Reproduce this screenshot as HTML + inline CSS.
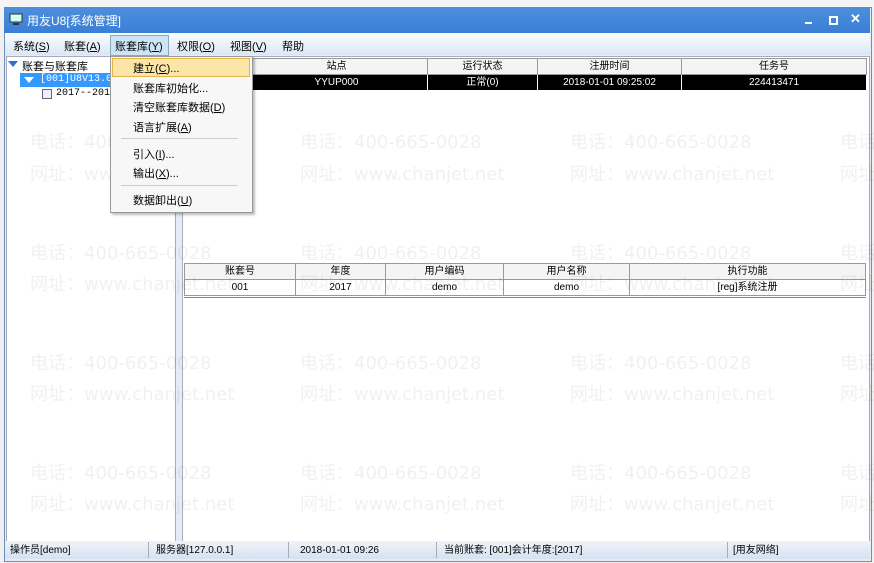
<!DOCTYPE html>
<html><head><meta charset="utf-8"><style>
body{margin:0;width:874px;height:563px;background:#f0f0f0;position:relative;overflow:hidden;font-family:"Liberation Sans","Noto Sans CJK SC",sans-serif;font-size:11px;color:#000}
.abs{position:absolute}
.wm{position:absolute;color:rgba(0,0,0,0.06);font-size:18px;white-space:nowrap;font-family:"DejaVu Sans","Noto Sans CJK SC",sans-serif;z-index:50}
table{border-collapse:collapse;position:absolute;font-size:10px;table-layout:fixed}
td{border:1px solid #999;text-align:center;height:15px;padding:0;line-height:15px;overflow:hidden;white-space:nowrap}
.st{position:absolute;top:545px;font-size:10px;line-height:12px}
</style></head><body>
<div class="abs" style="left:0;top:0;width:874px;height:8px;background:#f4f4f4"></div>
<div class="abs" style="left:4px;top:7px;width:866px;height:553px;background:#e4ecf7;border:1px solid #6b8fc0"></div>
<div class="abs" style="left:4px;top:7px;width:866px;height:26px;background:linear-gradient(#4c8fdc,#3a7fd6)"></div>
<svg class="abs" style="left:9px;top:13px" width="14" height="13"><rect x="1" y="1" width="12" height="8" fill="#cfe" stroke="#333"/><rect x="4" y="10" width="6" height="2" fill="#333"/></svg>
<div class="abs" style="left:27px;top:12px;color:#fff;font-size:12px">用友U8[系统管理]</div>
<div class="abs" style="left:805px;top:22px;width:7px;height:2px;background:#fff"></div>
<div class="abs" style="left:829px;top:16px;width:5px;height:5px;border:2px solid #fff"></div>
<div class="abs" style="left:850px;top:11px;color:#fff;font-size:13px;font-weight:bold">✕</div>
<div class="abs" style="left:5px;top:33px;width:865px;height:22px;background:linear-gradient(#fafcff,#dce7f4)"></div>
<div class="abs" style="left:110px;top:35px;width:57px;height:19px;background:#cde4f7;border:1px solid #8ab"></div>
<div class="abs" style="left:13px;top:38px">系统(<u>S</u>)</div>
<div class="abs" style="left:64px;top:38px">账套(<u>A</u>)</div>
<div class="abs" style="left:115px;top:38px">账套库(<u>Y</u>)</div>
<div class="abs" style="left:177px;top:38px">权限(<u>O</u>)</div>
<div class="abs" style="left:230px;top:38px">视图(<u>V</u>)</div>
<div class="abs" style="left:282px;top:38px">帮助</div>
<div class="abs" style="left:6px;top:56px;width:168px;height:484px;background:#fff;border:1px solid #aab"></div>
<div class="abs" style="left:8px;top:61px;width:0;height:0;border-left:5px solid transparent;border-right:5px solid transparent;border-top:6px solid #2a6fd6"></div>
<div class="abs" style="left:22px;top:58px">账套与账套库</div>
<div class="abs" style="left:20px;top:73px;width:90px;height:14px;background:#3399ff"></div>
<div class="abs" style="left:24px;top:77px;width:0;height:0;border-left:5px solid transparent;border-right:5px solid transparent;border-top:6px solid #fff"></div>
<div class="abs" style="left:40px;top:74px;color:#fff;font-size:10px;font-family:'Liberation Mono',monospace">[001]U8V13.0ź</div>
<div class="abs" style="left:42px;top:89px;width:8px;height:8px;border:1px solid #667;background:#eef"></div>
<div class="abs" style="left:56px;top:88px;font-size:10px;font-family:'Liberation Mono',monospace">2017--2017</div>
<div class="abs" style="left:182px;top:56px;width:686px;height:484px;background:#fff;border:1px solid #aab"></div>
<table style="left:183px;top:58px;width:684px">
<colgroup><col style="width:62px"><col style="width:182px"><col style="width:110px"><col style="width:144px"><col></colgroup>
<tr style="background:#f4f4f4"><td style="text-align:left;padding-left:70px">统</td><td>站点</td><td>运行状态</td><td>注册时间</td><td>任务号</td></tr>
<tr style="background:#000;color:#fff"><td style="text-align:left;padding-left:66px">理</td><td style="border-color:#fff">YYUP000</td><td style="border-color:#fff">正常(0)</td><td style="border-color:#fff">2018-01-01 09:25:02</td><td style="border-color:#fff">224413471</td></tr>
</table>
<table style="left:184px;top:263px;width:682px">
<colgroup><col style="width:111px"><col style="width:90px"><col style="width:118px"><col style="width:126px"><col></colgroup>
<tr style="background:#f4f4f4"><td>账套号</td><td>年度</td><td>用户编码</td><td>用户名称</td><td>执行功能</td></tr>
<tr><td>001</td><td>2017</td><td>demo</td><td>demo</td><td>[reg]系统注册</td></tr>
</table>
<div class="abs" style="left:184px;top:297px;width:682px;height:1px;background:#888"></div>
<div class="abs" style="left:110px;top:56px;width:141px;height:155px;background:#f7f7f7;border:1px solid #999;box-shadow:2px 2px 2px rgba(0,0,0,.25);z-index:60"></div>
<div class="abs" style="left:112px;top:58px;width:136px;height:17px;background:#fbe6a8;border:1px solid #e3b54a;z-index:61"></div>
<div class="abs" style="left:121px;top:138px;width:117px;height:1px;background:#ccc;z-index:61"></div>
<div class="abs" style="left:121px;top:185px;width:117px;height:1px;background:#ccc;z-index:61"></div>
<div class="abs" style="left:133px;top:60px;z-index:62;line-height:19.5px">建立(<u>C</u>)...<br>账套库初始化...<br>清空账套库数据(<u>D</u>)<br>语言扩展(<u>A</u>)</div>
<div class="abs" style="left:133px;top:146px;z-index:62;line-height:19px">引入(<u>I</u>)...<br>输出(<u>X</u>)...</div>
<div class="abs" style="left:133px;top:192px;z-index:62">数据卸出(<u>U</u>)</div>
<div class="abs" style="left:5px;top:541px;width:865px;height:18px;background:linear-gradient(#eef3fa,#d6e2f1)"></div>
<div class="st" style="left:10px">操作员[demo]</div>
<div class="abs" style="left:148px;top:542px;width:1px;height:16px;background:#aab"></div>
<div class="st" style="left:156px">服务器[127.0.0.1]</div>
<div class="abs" style="left:288px;top:542px;width:1px;height:16px;background:#aab"></div>
<div class="st" style="left:300px">2018-01-01 09:26</div>
<div class="abs" style="left:436px;top:542px;width:1px;height:16px;background:#aab"></div>
<div class="st" style="left:444px">当前账套: [001]会计年度:[2017]</div>
<div class="abs" style="left:727px;top:542px;width:1px;height:16px;background:#aab"></div>
<div class="st" style="left:733px">[用友网络]</div>
<div class="wm" style="left:30px;top:128px">电话：400-665-0028</div><div class="wm" style="left:300px;top:128px">电话：400-665-0028</div><div class="wm" style="left:570px;top:128px">电话：400-665-0028</div><div class="wm" style="left:840px;top:128px">电话</div>
<div class="wm" style="left:30px;top:160px">网址：www.chanjet.net</div><div class="wm" style="left:300px;top:160px">网址：www.chanjet.net</div><div class="wm" style="left:570px;top:160px">网址：www.chanjet.net</div><div class="wm" style="left:840px;top:160px">网址</div>
<div class="wm" style="left:30px;top:239px">电话：400-665-0028</div><div class="wm" style="left:300px;top:239px">电话：400-665-0028</div><div class="wm" style="left:570px;top:239px">电话：400-665-0028</div><div class="wm" style="left:840px;top:239px">电话</div>
<div class="wm" style="left:30px;top:270px">网址：www.chanjet.net</div><div class="wm" style="left:300px;top:270px">网址：www.chanjet.net</div><div class="wm" style="left:570px;top:270px">网址：www.chanjet.net</div><div class="wm" style="left:840px;top:270px">网址</div>
<div class="wm" style="left:30px;top:349px">电话：400-665-0028</div><div class="wm" style="left:300px;top:349px">电话：400-665-0028</div><div class="wm" style="left:570px;top:349px">电话：400-665-0028</div><div class="wm" style="left:840px;top:349px">电话</div>
<div class="wm" style="left:30px;top:380px">网址：www.chanjet.net</div><div class="wm" style="left:300px;top:380px">网址：www.chanjet.net</div><div class="wm" style="left:570px;top:380px">网址：www.chanjet.net</div><div class="wm" style="left:840px;top:380px">网址</div>
<div class="wm" style="left:30px;top:459px">电话：400-665-0028</div><div class="wm" style="left:300px;top:459px">电话：400-665-0028</div><div class="wm" style="left:570px;top:459px">电话：400-665-0028</div><div class="wm" style="left:840px;top:459px">电话</div>
<div class="wm" style="left:30px;top:490px">网址：www.chanjet.net</div><div class="wm" style="left:300px;top:490px">网址：www.chanjet.net</div><div class="wm" style="left:570px;top:490px">网址：www.chanjet.net</div><div class="wm" style="left:840px;top:490px">网址</div>
</body></html>
